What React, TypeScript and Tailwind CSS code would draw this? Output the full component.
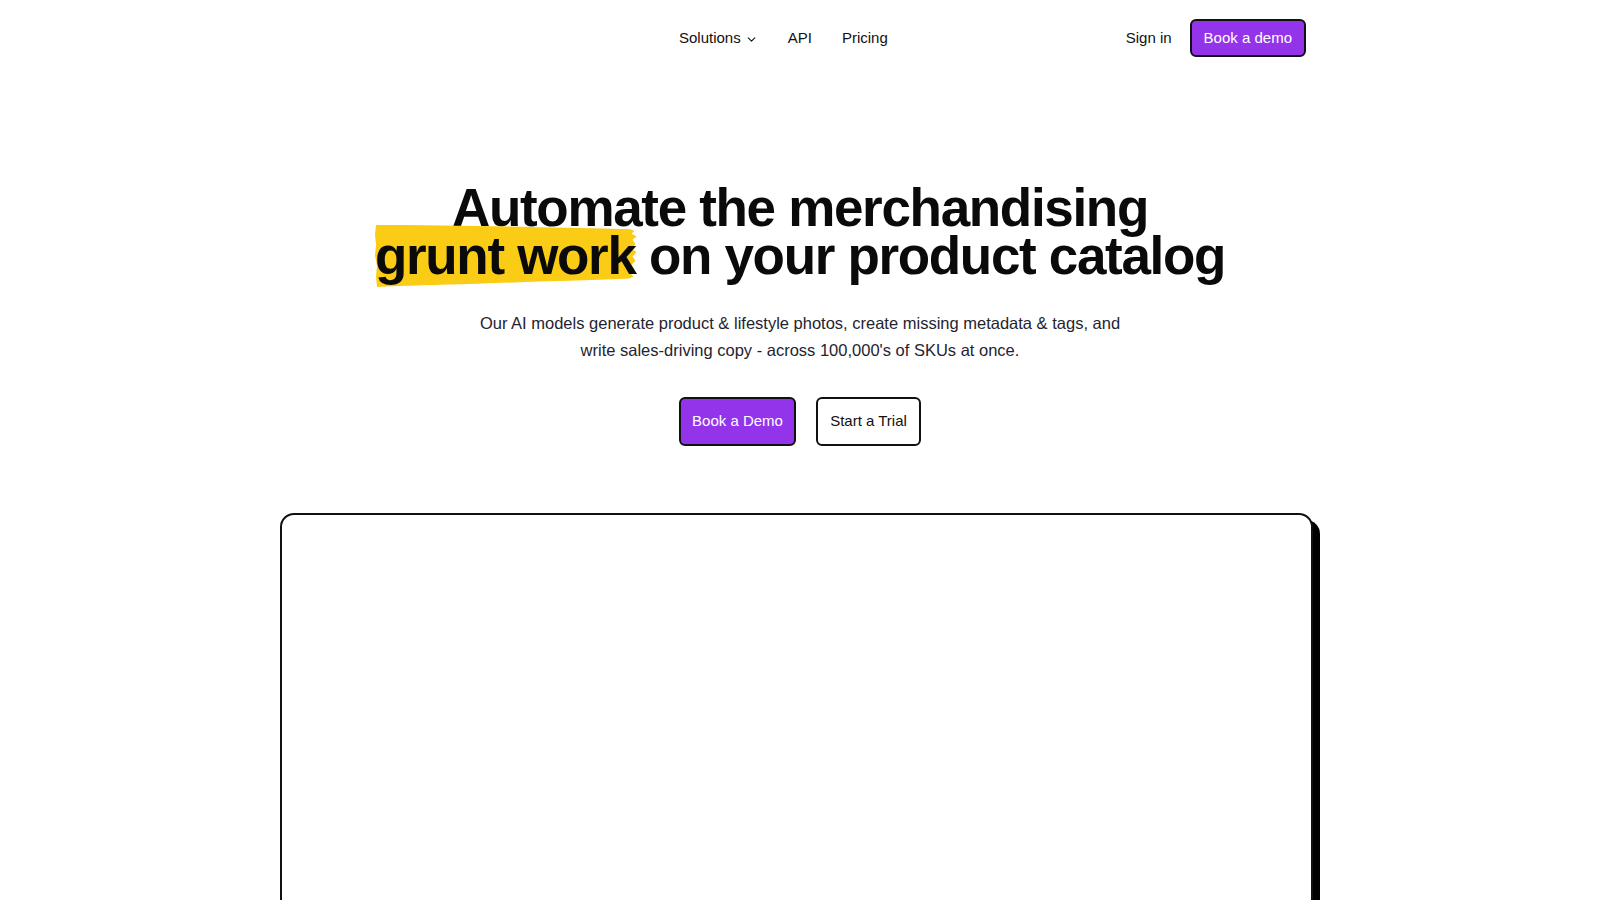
import { ChevronDown } from "lucide-react";

function BrushMark() {
  return (
    <svg
      className="absolute left-[0px] top-[-8px] -z-10 h-[calc(100%+15px)] w-[calc(100%+4px)]"
      viewBox="0 0 260 60"
      preserveAspectRatio="none"
      aria-hidden="true"
    >
      <path
        d="M1 1 C50 1 110 2 160 3 C200 4 230 4 251 5 L255 7 L252 9 L257 12 L253 15 L256 19 L252 23 L257 27 L253 31 L256 35 L252 39 L255 43 L251 47 L254 50 L250 52 C200 54 150 55 100 57 C60 58 30 59 2 60 L1 50 L2 40 L0 30 L1 20 L0 10 Z"
        fill="#facc15"
      />
    </svg>
  );
}

function NavBar() {
  return (
    <header className="mx-auto flex h-[76px] w-[1032px] items-center text-[15px] text-[#111]">
      <div className="w-[395px]" />
      <nav className="flex items-center gap-[30px]">
        <button className="flex items-center gap-1">
          Solutions
          <ChevronDown className="mt-[2px] h-[13px] w-[13px]" strokeWidth={2} />
        </button>
        <a href="#">API</a>
        <a href="#">Pricing</a>
      </nav>
      <div className="ml-auto mr-[10px] flex items-center gap-[18px]">
        <a href="#">Sign in</a>
        <a
          href="#"
          className="rounded-md border-2 border-[#111] bg-[#9333ea] px-[12px] py-[6px] text-white"
        >
          Book a demo
        </a>
      </div>
    </header>
  );
}

export default function App() {
  return (
    <div
      className="min-h-screen overflow-hidden bg-white"
      style={{ fontFamily: '"Liberation Sans", Arial, sans-serif' }}
    >
      <NavBar />

      <section className="flex flex-col items-center pt-[108px]">
        <h1 className="text-center text-[53px] font-bold leading-[48px] tracking-tight text-[#0a0a0a]">
          Automate the merchandising
          <br />
          <span className="relative isolate inline-block">
            <BrushMark />
            grunt work
          </span>{" "}
          on your product catalog
        </h1>

        <p className="mt-[30px] w-[660px] text-center text-[16.5px] leading-[26.5px] text-[#1f2430]">
          Our AI models generate product &amp; lifestyle photos, create missing
          metadata &amp; tags, and write sales-driving copy - across 100,000's of
          SKUs at once.
        </p>

        <div className="mt-[34px] flex gap-[20px] text-[15px]">
          <a
            href="#"
            className="flex h-[49px] w-[117px] items-center justify-center rounded-md border-2 border-[#111] bg-[#9333ea] text-white"
          >
            Book a Demo
          </a>
          <a
            href="#"
            className="flex h-[49px] w-[105px] items-center justify-center rounded-md border-2 border-[#111] bg-white text-[#111]"
          >
            Start a Trial
          </a>
        </div>

        <div className="mr-[8px] mt-[67px] h-[500px] w-[1033px] rounded-[14px] border-2 border-[#111] bg-white shadow-[7px_7px_0_0_#000]" />
      </section>
    </div>
  );
}
